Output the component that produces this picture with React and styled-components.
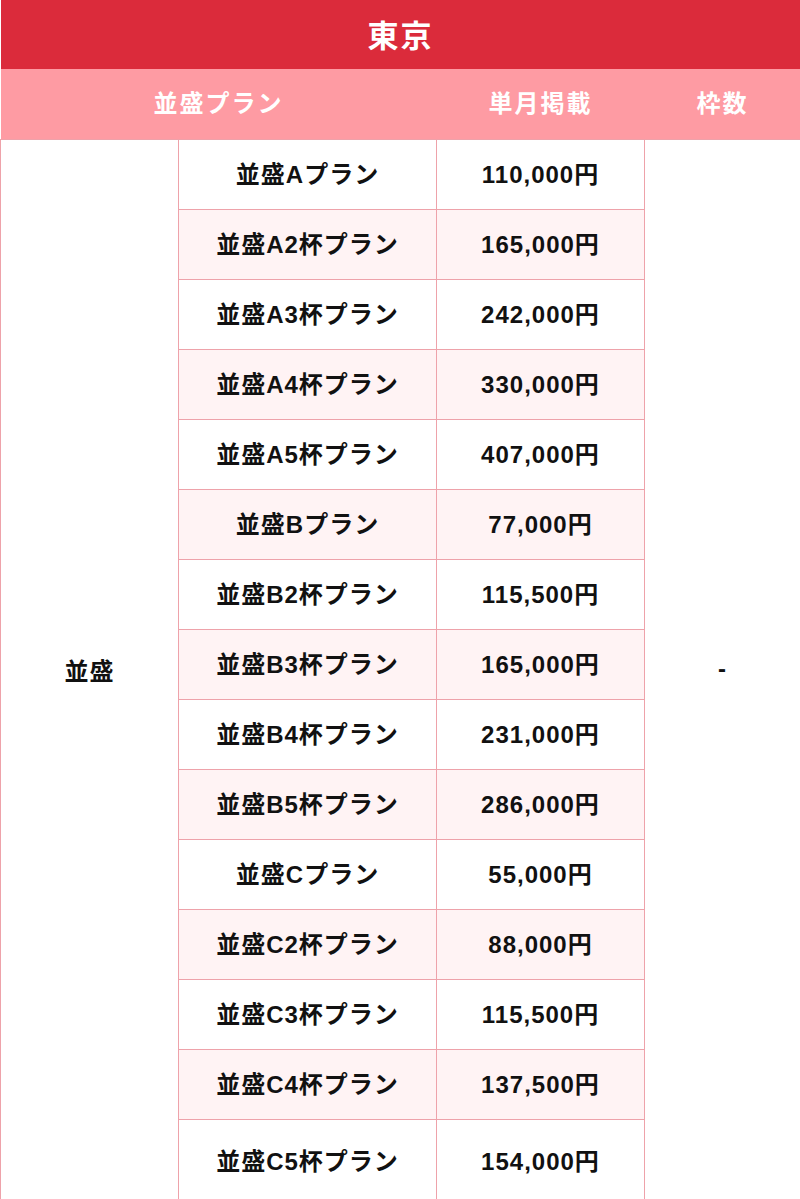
import React from 'react';
import styled, { createGlobalStyle } from 'styled-components';

const GlobalStyle = createGlobalStyle`
  html, body {
    margin: 0;
    padding: 0;
    background: #fff;
  }
  body {
    font-family: "Liberation Sans", "Noto Sans CJK JP", sans-serif;
    color: #111;
  }
`;

const Table = styled.table`
  width: 800px;
  border-collapse: collapse;
  table-layout: fixed;
  font-weight: bold;
  text-align: center;
`;

const TitleCell = styled.th`
  height: 69px;
  padding: 0 0 3px;
  box-sizing: border-box;
  background: #db2b3b;
  color: #fff;
  font-size: 31px;
  letter-spacing: 2px;
  font-weight: bold;
`;

const HeadCell = styled.th`
  height: 70px;
  padding: 0 0 5px;
  box-sizing: border-box;
  background: #fe9ba3;
  color: #fff;
  font-size: 24px;
  font-weight: bold;
  letter-spacing: 2px;
`;

const Row = styled.tr`
  background: ${props => (props.$alt ? '#fff3f4' : '#fff')};
`;

const Cell = styled.td`
  height: ${props => (props.$tall ? '84px' : '70px')};
  padding: 0 0 4px;
  box-sizing: border-box;
  border: 1px solid #eea2aa;
  font-size: 24px;
  letter-spacing: 1px;
  color: #111;
  background: ${props => (props.$plain ? '#fff' : 'inherit')};
`;

const plans = [
  ['並盛Aプラン', '110,000円'],
  ['並盛A2杯プラン', '165,000円'],
  ['並盛A3杯プラン', '242,000円'],
  ['並盛A4杯プラン', '330,000円'],
  ['並盛A5杯プラン', '407,000円'],
  ['並盛Bプラン', '77,000円'],
  ['並盛B2杯プラン', '115,500円'],
  ['並盛B3杯プラン', '165,000円'],
  ['並盛B4杯プラン', '231,000円'],
  ['並盛B5杯プラン', '286,000円'],
  ['並盛Cプラン', '55,000円'],
  ['並盛C2杯プラン', '88,000円'],
  ['並盛C3杯プラン', '115,500円'],
  ['並盛C4杯プラン', '137,500円'],
  ['並盛C5杯プラン', '154,000円'],
];

const App = () => {
  return (
    <>
      <GlobalStyle />
      <Table>
        <colgroup>
          <col style={{ width: 178 }} />
          <col style={{ width: 258 }} />
          <col style={{ width: 208 }} />
          <col style={{ width: 156 }} />
        </colgroup>
        <thead>
          <tr>
            <TitleCell colSpan={4}>東京</TitleCell>
          </tr>
          <tr>
            <HeadCell colSpan={2}>並盛プラン</HeadCell>
            <HeadCell>単月掲載</HeadCell>
            <HeadCell>枠数</HeadCell>
          </tr>
        </thead>
        <tbody>
          {plans.map(([name, price], i) => (
            <Row key={name} $alt={i % 2 === 1}>
              {i === 0 && (
                <Cell $plain rowSpan={plans.length}>
                  並盛
                </Cell>
              )}
              <Cell $tall={i === plans.length - 1}>{name}</Cell>
              <Cell $tall={i === plans.length - 1}>{price}</Cell>
              {i === 0 && (
                <Cell $plain rowSpan={plans.length}>
                  -
                </Cell>
              )}
            </Row>
          ))}
        </tbody>
      </Table>
    </>
  );
};

export default App;
